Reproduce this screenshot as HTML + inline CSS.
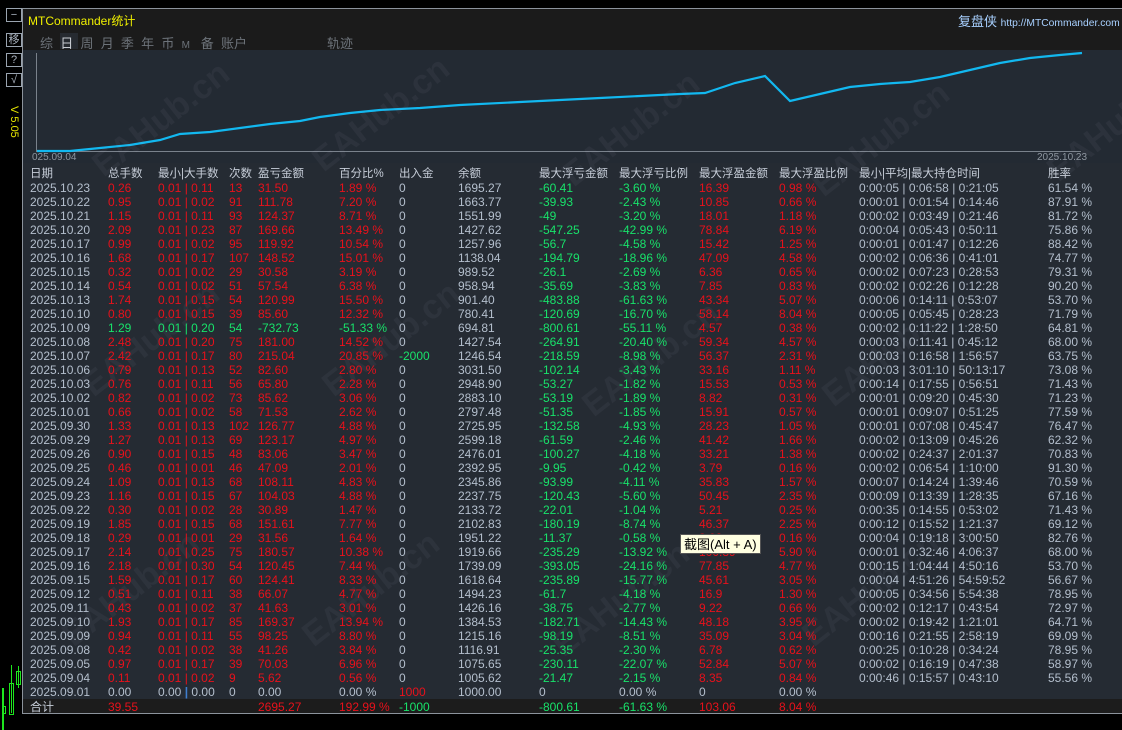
<!DOCTYPE html>
<html><head><meta charset="utf-8"><style>
*{margin:0;padding:0;box-sizing:border-box}
body{width:1122px;height:730px;background:#000;position:relative;overflow:hidden;font-family:"Liberation Sans","Noto Sans CJK SC",sans-serif;font-size:12px;color:#b4bfcd}
.abs{position:absolute;white-space:nowrap}
.btn{position:absolute;left:6px;width:16px;height:14px;border:1px solid #9aa4b0;color:#aab3bf;font-size:11px;text-align:center;line-height:12px}
.row{position:absolute;left:24px;width:1098px;height:14px;line-height:14px;white-space:nowrap}
.row span{position:absolute;top:0}
.r{color:#e8111b}.g{color:#18e26a}.w{color:#b4bfcd}
.a{left:6px}.b{left:84px}.c{left:134px}.d{left:205px}.e{left:234px}.f{left:315px}.h{left:375px}.i{left:434px}.j{left:515px}.k{left:595px}.l{left:675px}.m{left:755px}.n{left:835px}.o{left:1024px}
.hd{color:#c6cdd8;font-size:11.5px}
.wm{position:absolute;font:bold 34px "Liberation Sans",sans-serif;color:rgba(200,200,210,0.055);transform:rotate(-38deg);white-space:nowrap}
</style></head><body>
<div class="btn" style="top:8px">−</div>
<div class="btn" style="top:33px">移</div>
<div class="btn" style="top:53px">?</div>
<div class="btn" style="top:73px">√</div>
<div class="abs" style="top:106px;color:#e6e600;font-size:11px;transform:rotate(90deg);transform-origin:left top;left:20px">V 5.05</div>
<div class="abs" style="left:2px;top:688px;width:2px;height:42px;background:#1ee51e"></div>
<div class="abs" style="left:3px;top:706px;width:3px;height:8px;border:1px solid #1ee51e"></div>
<div class="abs" style="left:9px;top:683px;width:5px;height:32px;border:1px solid #1ee51e"></div>
<div class="abs" style="left:11px;top:665px;width:1px;height:48px;background:#1ee51e"></div>
<div class="abs" style="left:16px;top:671px;width:5px;height:14px;border:1px solid #1ee51e"></div>
<div class="abs" style="left:18px;top:666px;width:1px;height:22px;background:#1ee51e"></div>
<div class="abs" style="left:22px;top:8px;width:1100px;height:706px;background:#252b33;border-left:1px solid #8c939c;border-top:1px solid #8c939c;border-bottom:1px solid #8c939c"></div>
<div class="abs" style="left:23px;top:9px;width:1099px;height:41px;background:#1b1b1b"></div>
<div class="abs" style="left:28px;top:12px;color:#f0f000;font-size:12px">MTCommander统计</div>
<div class="abs" style="left:958px;top:11px;color:#a8d0ff;font-size:13px">复盘侠 <span style="font-size:10.3px">http://MTCommander.com</span></div>
<div class="abs" style="left:60px;top:33px;width:18px;height:16px;background:#262a30"></div>
<div class="abs" style="left:40px;top:33px;color:#6d737a;font-size:13px">综&nbsp; <span style="color:#c8ccd2">日</span>&nbsp; 周&nbsp; 月&nbsp; 季&nbsp; 年&nbsp; 币&nbsp; <span style="font-size:10px">M</span>&nbsp;&nbsp; 备&nbsp; 账户</div>
<div class="abs" style="left:327px;top:33px;color:#6d737a;font-size:13px">轨迹</div>
<div class="abs" style="left:23px;top:50px;width:1099px;height:113px;background:#232a33"></div>
<div class="abs" style="left:36px;top:53px;width:1px;height:99px;background:#7a828c"></div>
<div class="abs" style="left:36px;top:151px;width:1045px;height:1px;background:#7a828c"></div>
<div class="abs" style="left:32px;top:152px;font-size:10px;color:#8e96a0">025.09.04</div>
<div class="abs" style="left:1037px;top:152px;font-size:10px;color:#8e96a0">2025.10.23</div>
<svg class="abs" style="left:0;top:0" width="1122" height="170"><polyline fill="none" stroke="#12b8f0" stroke-width="2.2" points="37,151 70,151 100,148 130,145 160,140 180,134 210,132 240,128 270,124 300,121 320,117 350,113 380,110 420,108 460,105 520,102 560,100 600,98 640,96 680,94 705,93 735,83 765,76 790,101 820,94 850,87 880,84 910,82 940,77 970,70 1000,63 1030,58 1060,55 1082,53"/></svg>
<div class="wm" style="left:80px;top:100px">EAHub.cn</div>
<div class="wm" style="left:300px;top:95px">EAHub.cn</div>
<div class="wm" style="left:550px;top:110px">EAHub.cn</div>
<div class="wm" style="left:800px;top:120px">EAHub.cn</div>
<div class="wm" style="left:1040px;top:120px">EAHub</div>
<div class="wm" style="left:70px;top:320px">EAHub.cn</div>
<div class="wm" style="left:310px;top:320px">EAHub.cn</div>
<div class="wm" style="left:570px;top:340px">EAHub.cn</div>
<div class="wm" style="left:810px;top:330px">EAHub.cn</div>
<div class="wm" style="left:50px;top:570px">EAHub.cn</div>
<div class="wm" style="left:290px;top:570px">EAHub.cn</div>
<div class="wm" style="left:540px;top:580px">EAHub.cn</div>
<div class="wm" style="left:790px;top:570px">EAHub.cn</div>
<div class="row hd" style="top:166px;height:16px;line-height:16px"><span class="a">日期</span><span class="b">总手数</span><span class="c">最小|大手数</span><span class="d">次数</span><span class="e">盈亏金额</span><span class="f">百分比%</span><span class="h">出入金</span><span class="i">余额</span><span class="j">最大浮亏金额</span><span class="k">最大浮亏比例</span><span class="l">最大浮盈金额</span><span class="m">最大浮盈比例</span><span class="n">最小|平均|最大持仓时间</span><span class="o">胜率</span></div>
<div class="row" style="top:181px"><span class="a">2025.10.23</span><span class="b r">0.26</span><span class="c r">0.01 | 0.11</span><span class="d r">13</span><span class="e r">31.50</span><span class="f r">1.89 %</span><span class="h">0</span><span class="i">1695.27</span><span class="j g">-60.41</span><span class="k g">-3.60 %</span><span class="l r">16.39</span><span class="m r">0.98 %</span><span class="n">0:00:05 | 0:06:58 | 0:21:05</span><span class="o">61.54 %</span></div>
<div class="row" style="top:195px"><span class="a">2025.10.22</span><span class="b r">0.95</span><span class="c r">0.01 | 0.02</span><span class="d r">91</span><span class="e r">111.78</span><span class="f r">7.20 %</span><span class="h">0</span><span class="i">1663.77</span><span class="j g">-39.93</span><span class="k g">-2.43 %</span><span class="l r">10.85</span><span class="m r">0.66 %</span><span class="n">0:00:01 | 0:01:54 | 0:14:46</span><span class="o">87.91 %</span></div>
<div class="row" style="top:209px"><span class="a">2025.10.21</span><span class="b r">1.15</span><span class="c r">0.01 | 0.11</span><span class="d r">93</span><span class="e r">124.37</span><span class="f r">8.71 %</span><span class="h">0</span><span class="i">1551.99</span><span class="j g">-49</span><span class="k g">-3.20 %</span><span class="l r">18.01</span><span class="m r">1.18 %</span><span class="n">0:00:02 | 0:03:49 | 0:21:46</span><span class="o">81.72 %</span></div>
<div class="row" style="top:223px"><span class="a">2025.10.20</span><span class="b r">2.09</span><span class="c r">0.01 | 0.23</span><span class="d r">87</span><span class="e r">169.66</span><span class="f r">13.49 %</span><span class="h">0</span><span class="i">1427.62</span><span class="j g">-547.25</span><span class="k g">-42.99 %</span><span class="l r">78.84</span><span class="m r">6.19 %</span><span class="n">0:00:04 | 0:05:43 | 0:50:11</span><span class="o">75.86 %</span></div>
<div class="row" style="top:237px"><span class="a">2025.10.17</span><span class="b r">0.99</span><span class="c r">0.01 | 0.02</span><span class="d r">95</span><span class="e r">119.92</span><span class="f r">10.54 %</span><span class="h">0</span><span class="i">1257.96</span><span class="j g">-56.7</span><span class="k g">-4.58 %</span><span class="l r">15.42</span><span class="m r">1.25 %</span><span class="n">0:00:01 | 0:01:47 | 0:12:26</span><span class="o">88.42 %</span></div>
<div class="row" style="top:251px"><span class="a">2025.10.16</span><span class="b r">1.68</span><span class="c r">0.01 | 0.17</span><span class="d r">107</span><span class="e r">148.52</span><span class="f r">15.01 %</span><span class="h">0</span><span class="i">1138.04</span><span class="j g">-194.79</span><span class="k g">-18.96 %</span><span class="l r">47.09</span><span class="m r">4.58 %</span><span class="n">0:00:02 | 0:06:36 | 0:41:01</span><span class="o">74.77 %</span></div>
<div class="row" style="top:265px"><span class="a">2025.10.15</span><span class="b r">0.32</span><span class="c r">0.01 | 0.02</span><span class="d r">29</span><span class="e r">30.58</span><span class="f r">3.19 %</span><span class="h">0</span><span class="i">989.52</span><span class="j g">-26.1</span><span class="k g">-2.69 %</span><span class="l r">6.36</span><span class="m r">0.65 %</span><span class="n">0:00:02 | 0:07:23 | 0:28:53</span><span class="o">79.31 %</span></div>
<div class="row" style="top:279px"><span class="a">2025.10.14</span><span class="b r">0.54</span><span class="c r">0.01 | 0.02</span><span class="d r">51</span><span class="e r">57.54</span><span class="f r">6.38 %</span><span class="h">0</span><span class="i">958.94</span><span class="j g">-35.69</span><span class="k g">-3.83 %</span><span class="l r">7.85</span><span class="m r">0.83 %</span><span class="n">0:00:02 | 0:02:26 | 0:12:28</span><span class="o">90.20 %</span></div>
<div class="row" style="top:293px"><span class="a">2025.10.13</span><span class="b r">1.74</span><span class="c r">0.01 | 0.15</span><span class="d r">54</span><span class="e r">120.99</span><span class="f r">15.50 %</span><span class="h">0</span><span class="i">901.40</span><span class="j g">-483.88</span><span class="k g">-61.63 %</span><span class="l r">43.34</span><span class="m r">5.07 %</span><span class="n">0:00:06 | 0:14:11 | 0:53:07</span><span class="o">53.70 %</span></div>
<div class="row" style="top:307px"><span class="a">2025.10.10</span><span class="b r">0.80</span><span class="c r">0.01 | 0.15</span><span class="d r">39</span><span class="e r">85.60</span><span class="f r">12.32 %</span><span class="h">0</span><span class="i">780.41</span><span class="j g">-120.69</span><span class="k g">-16.70 %</span><span class="l r">58.14</span><span class="m r">8.04 %</span><span class="n">0:00:05 | 0:05:45 | 0:28:23</span><span class="o">71.79 %</span></div>
<div class="row" style="top:321px"><span class="a">2025.10.09</span><span class="b g">1.29</span><span class="c g">0.01 | 0.20</span><span class="d g">54</span><span class="e g">-732.73</span><span class="f g">-51.33 %</span><span class="h">0</span><span class="i">694.81</span><span class="j g">-800.61</span><span class="k g">-55.11 %</span><span class="l r">4.57</span><span class="m r">0.38 %</span><span class="n">0:00:02 | 0:11:22 | 1:28:50</span><span class="o">64.81 %</span></div>
<div class="row" style="top:335px"><span class="a">2025.10.08</span><span class="b r">2.48</span><span class="c r">0.01 | 0.20</span><span class="d r">75</span><span class="e r">181.00</span><span class="f r">14.52 %</span><span class="h">0</span><span class="i">1427.54</span><span class="j g">-264.91</span><span class="k g">-20.40 %</span><span class="l r">59.34</span><span class="m r">4.57 %</span><span class="n">0:00:03 | 0:11:41 | 0:45:12</span><span class="o">68.00 %</span></div>
<div class="row" style="top:349px"><span class="a">2025.10.07</span><span class="b r">2.42</span><span class="c r">0.01 | 0.17</span><span class="d r">80</span><span class="e r">215.04</span><span class="f r">20.85 %</span><span class="h g">-2000</span><span class="i">1246.54</span><span class="j g">-218.59</span><span class="k g">-8.98 %</span><span class="l r">56.37</span><span class="m r">2.31 %</span><span class="n">0:00:03 | 0:16:58 | 1:56:57</span><span class="o">63.75 %</span></div>
<div class="row" style="top:363px"><span class="a">2025.10.06</span><span class="b r">0.79</span><span class="c r">0.01 | 0.13</span><span class="d r">52</span><span class="e r">82.60</span><span class="f r">2.80 %</span><span class="h">0</span><span class="i">3031.50</span><span class="j g">-102.14</span><span class="k g">-3.43 %</span><span class="l r">33.16</span><span class="m r">1.11 %</span><span class="n">0:00:03 | 3:01:10 | 50:13:17</span><span class="o">73.08 %</span></div>
<div class="row" style="top:377px"><span class="a">2025.10.03</span><span class="b r">0.76</span><span class="c r">0.01 | 0.11</span><span class="d r">56</span><span class="e r">65.80</span><span class="f r">2.28 %</span><span class="h">0</span><span class="i">2948.90</span><span class="j g">-53.27</span><span class="k g">-1.82 %</span><span class="l r">15.53</span><span class="m r">0.53 %</span><span class="n">0:00:14 | 0:17:55 | 0:56:51</span><span class="o">71.43 %</span></div>
<div class="row" style="top:391px"><span class="a">2025.10.02</span><span class="b r">0.82</span><span class="c r">0.01 | 0.02</span><span class="d r">73</span><span class="e r">85.62</span><span class="f r">3.06 %</span><span class="h">0</span><span class="i">2883.10</span><span class="j g">-53.19</span><span class="k g">-1.89 %</span><span class="l r">8.82</span><span class="m r">0.31 %</span><span class="n">0:00:01 | 0:09:20 | 0:45:30</span><span class="o">71.23 %</span></div>
<div class="row" style="top:405px"><span class="a">2025.10.01</span><span class="b r">0.66</span><span class="c r">0.01 | 0.02</span><span class="d r">58</span><span class="e r">71.53</span><span class="f r">2.62 %</span><span class="h">0</span><span class="i">2797.48</span><span class="j g">-51.35</span><span class="k g">-1.85 %</span><span class="l r">15.91</span><span class="m r">0.57 %</span><span class="n">0:00:01 | 0:09:07 | 0:51:25</span><span class="o">77.59 %</span></div>
<div class="row" style="top:419px"><span class="a">2025.09.30</span><span class="b r">1.33</span><span class="c r">0.01 | 0.13</span><span class="d r">102</span><span class="e r">126.77</span><span class="f r">4.88 %</span><span class="h">0</span><span class="i">2725.95</span><span class="j g">-132.58</span><span class="k g">-4.93 %</span><span class="l r">28.23</span><span class="m r">1.05 %</span><span class="n">0:00:01 | 0:07:08 | 0:45:47</span><span class="o">76.47 %</span></div>
<div class="row" style="top:433px"><span class="a">2025.09.29</span><span class="b r">1.27</span><span class="c r">0.01 | 0.13</span><span class="d r">69</span><span class="e r">123.17</span><span class="f r">4.97 %</span><span class="h">0</span><span class="i">2599.18</span><span class="j g">-61.59</span><span class="k g">-2.46 %</span><span class="l r">41.42</span><span class="m r">1.66 %</span><span class="n">0:00:02 | 0:13:09 | 0:45:26</span><span class="o">62.32 %</span></div>
<div class="row" style="top:447px"><span class="a">2025.09.26</span><span class="b r">0.90</span><span class="c r">0.01 | 0.15</span><span class="d r">48</span><span class="e r">83.06</span><span class="f r">3.47 %</span><span class="h">0</span><span class="i">2476.01</span><span class="j g">-100.27</span><span class="k g">-4.18 %</span><span class="l r">33.21</span><span class="m r">1.38 %</span><span class="n">0:00:02 | 0:24:37 | 2:01:37</span><span class="o">70.83 %</span></div>
<div class="row" style="top:461px"><span class="a">2025.09.25</span><span class="b r">0.46</span><span class="c r">0.01 | 0.01</span><span class="d r">46</span><span class="e r">47.09</span><span class="f r">2.01 %</span><span class="h">0</span><span class="i">2392.95</span><span class="j g">-9.95</span><span class="k g">-0.42 %</span><span class="l r">3.79</span><span class="m r">0.16 %</span><span class="n">0:00:02 | 0:06:54 | 1:10:00</span><span class="o">91.30 %</span></div>
<div class="row" style="top:475px"><span class="a">2025.09.24</span><span class="b r">1.09</span><span class="c r">0.01 | 0.13</span><span class="d r">68</span><span class="e r">108.11</span><span class="f r">4.83 %</span><span class="h">0</span><span class="i">2345.86</span><span class="j g">-93.99</span><span class="k g">-4.11 %</span><span class="l r">35.83</span><span class="m r">1.57 %</span><span class="n">0:00:07 | 0:14:24 | 1:39:46</span><span class="o">70.59 %</span></div>
<div class="row" style="top:489px"><span class="a">2025.09.23</span><span class="b r">1.16</span><span class="c r">0.01 | 0.15</span><span class="d r">67</span><span class="e r">104.03</span><span class="f r">4.88 %</span><span class="h">0</span><span class="i">2237.75</span><span class="j g">-120.43</span><span class="k g">-5.60 %</span><span class="l r">50.45</span><span class="m r">2.35 %</span><span class="n">0:00:09 | 0:13:39 | 1:28:35</span><span class="o">67.16 %</span></div>
<div class="row" style="top:503px"><span class="a">2025.09.22</span><span class="b r">0.30</span><span class="c r">0.01 | 0.02</span><span class="d r">28</span><span class="e r">30.89</span><span class="f r">1.47 %</span><span class="h">0</span><span class="i">2133.72</span><span class="j g">-22.01</span><span class="k g">-1.04 %</span><span class="l r">5.21</span><span class="m r">0.25 %</span><span class="n">0:00:35 | 0:14:55 | 0:53:02</span><span class="o">71.43 %</span></div>
<div class="row" style="top:517px"><span class="a">2025.09.19</span><span class="b r">1.85</span><span class="c r">0.01 | 0.15</span><span class="d r">68</span><span class="e r">151.61</span><span class="f r">7.77 %</span><span class="h">0</span><span class="i">2102.83</span><span class="j g">-180.19</span><span class="k g">-8.74 %</span><span class="l r">46.37</span><span class="m r">2.25 %</span><span class="n">0:00:12 | 0:15:52 | 1:21:37</span><span class="o">69.12 %</span></div>
<div class="row" style="top:531px"><span class="a">2025.09.18</span><span class="b r">0.29</span><span class="c r">0.01 | 0.01</span><span class="d r">29</span><span class="e r">31.56</span><span class="f r">1.64 %</span><span class="h">0</span><span class="i">1951.22</span><span class="j g">-11.37</span><span class="k g">-0.58 %</span><span class="l r">3.08</span><span class="m r">0.16 %</span><span class="n">0:00:04 | 0:19:18 | 3:00:50</span><span class="o">82.76 %</span></div>
<div class="row" style="top:545px"><span class="a">2025.09.17</span><span class="b r">2.14</span><span class="c r">0.01 | 0.25</span><span class="d r">75</span><span class="e r">180.57</span><span class="f r">10.38 %</span><span class="h">0</span><span class="i">1919.66</span><span class="j g">-235.29</span><span class="k g">-13.92 %</span><span class="l r">100.89</span><span class="m r">5.90 %</span><span class="n">0:00:01 | 0:32:46 | 4:06:37</span><span class="o">68.00 %</span></div>
<div class="row" style="top:559px"><span class="a">2025.09.16</span><span class="b r">2.18</span><span class="c r">0.01 | 0.30</span><span class="d r">54</span><span class="e r">120.45</span><span class="f r">7.44 %</span><span class="h">0</span><span class="i">1739.09</span><span class="j g">-393.05</span><span class="k g">-24.16 %</span><span class="l r">77.85</span><span class="m r">4.77 %</span><span class="n">0:00:15 | 1:04:44 | 4:50:16</span><span class="o">53.70 %</span></div>
<div class="row" style="top:573px"><span class="a">2025.09.15</span><span class="b r">1.59</span><span class="c r">0.01 | 0.17</span><span class="d r">60</span><span class="e r">124.41</span><span class="f r">8.33 %</span><span class="h">0</span><span class="i">1618.64</span><span class="j g">-235.89</span><span class="k g">-15.77 %</span><span class="l r">45.61</span><span class="m r">3.05 %</span><span class="n">0:00:04 | 4:51:26 | 54:59:52</span><span class="o">56.67 %</span></div>
<div class="row" style="top:587px"><span class="a">2025.09.12</span><span class="b r">0.51</span><span class="c r">0.01 | 0.11</span><span class="d r">38</span><span class="e r">66.07</span><span class="f r">4.77 %</span><span class="h">0</span><span class="i">1494.23</span><span class="j g">-61.7</span><span class="k g">-4.18 %</span><span class="l r">16.9</span><span class="m r">1.30 %</span><span class="n">0:00:05 | 0:34:56 | 5:54:38</span><span class="o">78.95 %</span></div>
<div class="row" style="top:601px"><span class="a">2025.09.11</span><span class="b r">0.43</span><span class="c r">0.01 | 0.02</span><span class="d r">37</span><span class="e r">41.63</span><span class="f r">3.01 %</span><span class="h">0</span><span class="i">1426.16</span><span class="j g">-38.75</span><span class="k g">-2.77 %</span><span class="l r">9.22</span><span class="m r">0.66 %</span><span class="n">0:00:02 | 0:12:17 | 0:43:54</span><span class="o">72.97 %</span></div>
<div class="row" style="top:615px"><span class="a">2025.09.10</span><span class="b r">1.93</span><span class="c r">0.01 | 0.17</span><span class="d r">85</span><span class="e r">169.37</span><span class="f r">13.94 %</span><span class="h">0</span><span class="i">1384.53</span><span class="j g">-182.71</span><span class="k g">-14.43 %</span><span class="l r">48.18</span><span class="m r">3.95 %</span><span class="n">0:00:02 | 0:19:42 | 1:21:01</span><span class="o">64.71 %</span></div>
<div class="row" style="top:629px"><span class="a">2025.09.09</span><span class="b r">0.94</span><span class="c r">0.01 | 0.11</span><span class="d r">55</span><span class="e r">98.25</span><span class="f r">8.80 %</span><span class="h">0</span><span class="i">1215.16</span><span class="j g">-98.19</span><span class="k g">-8.51 %</span><span class="l r">35.09</span><span class="m r">3.04 %</span><span class="n">0:00:16 | 0:21:55 | 2:58:19</span><span class="o">69.09 %</span></div>
<div class="row" style="top:643px"><span class="a">2025.09.08</span><span class="b r">0.42</span><span class="c r">0.01 | 0.02</span><span class="d r">38</span><span class="e r">41.26</span><span class="f r">3.84 %</span><span class="h">0</span><span class="i">1116.91</span><span class="j g">-25.35</span><span class="k g">-2.30 %</span><span class="l r">6.78</span><span class="m r">0.62 %</span><span class="n">0:00:25 | 0:10:28 | 0:34:24</span><span class="o">78.95 %</span></div>
<div class="row" style="top:657px"><span class="a">2025.09.05</span><span class="b r">0.97</span><span class="c r">0.01 | 0.17</span><span class="d r">39</span><span class="e r">70.03</span><span class="f r">6.96 %</span><span class="h">0</span><span class="i">1075.65</span><span class="j g">-230.11</span><span class="k g">-22.07 %</span><span class="l r">52.84</span><span class="m r">5.07 %</span><span class="n">0:00:02 | 0:16:19 | 0:47:38</span><span class="o">58.97 %</span></div>
<div class="row" style="top:671px"><span class="a">2025.09.04</span><span class="b r">0.11</span><span class="c r">0.01 | 0.02</span><span class="d r">9</span><span class="e r">5.62</span><span class="f r">0.56 %</span><span class="h">0</span><span class="i">1005.62</span><span class="j g">-21.47</span><span class="k g">-2.15 %</span><span class="l r">8.35</span><span class="m r">0.84 %</span><span class="n">0:00:46 | 0:15:57 | 0:43:10</span><span class="o">55.56 %</span></div>
<div class="row" style="top:685px"><span class="a">2025.09.01</span><span class="b">0.00</span><span class="c">0.00 <b style="color:#3f7fd0">|</b> 0.00</span><span class="d">0</span><span class="e">0.00</span><span class="f">0.00 %</span><span class="h r">1000</span><span class="i">1000.00</span><span class="j">0</span><span class="k">0.00 %</span><span class="l">0</span><span class="m">0.00 %</span></div>
<div class="abs" style="left:23px;top:699px;width:1099px;height:14px;background:#1c1c1c"></div>
<div class="row" style="top:700px"><span class="a hd" style="font-size:12px">合计</span><span class="b r">39.55</span><span class="e r">2695.27</span><span class="f r">192.99 %</span><span class="h g">-1000</span><span class="j g">-800.61</span><span class="k g">-61.63 %</span><span class="l r">103.06</span><span class="m r">8.04 %</span></div>
<div class="abs" style="left:680px;top:534px;padding:0 3px;height:20px;line-height:19px;background:#ffffe1;border:1px solid #555;color:#000;font-size:13px">截图(Alt + A)</div>
</body></html>
